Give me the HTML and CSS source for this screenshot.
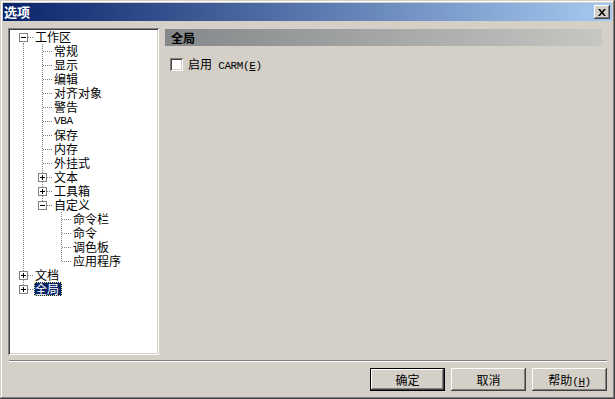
FILE: index.html
```html
<!DOCTYPE html>
<html lang="zh-CN">
  <head>
    <meta charset="UTF-8" />
    <title>选项</title>
    <link rel="stylesheet" href="styles.css">
  </head>
  <body>
    <div class="window">
      <div class="titlebar">
        <span class="titlebar__text">选项</span>
        <button class="titlebar__close">
          <svg width="8" height="7" viewBox="0 0 8 7">
            <path d="M0 0h2l2 2.5L6 0h2L5 3.5 8 7H6L4 4.5 2 7H0l3-3.5z" fill="#000"/>
          </svg>
        </button>
      </div>

      <div class="main">
        <div class="tree">
          <div class="row"><span class="cell cell--first"><span class="box box--minus"></span></span><span class="label">工作区</span></div>
          <div class="row"><span class="cell cell--line"></span><span class="cell cell--tee"></span><span class="label">常规</span></div>
          <div class="row"><span class="cell cell--line"></span><span class="cell cell--tee"></span><span class="label">显示</span></div>
          <div class="row"><span class="cell cell--line"></span><span class="cell cell--tee"></span><span class="label">编辑</span></div>
          <div class="row"><span class="cell cell--line"></span><span class="cell cell--tee"></span><span class="label">对齐对象</span></div>
          <div class="row"><span class="cell cell--line"></span><span class="cell cell--tee"></span><span class="label">警告</span></div>
          <div class="row"><span class="cell cell--line"></span><span class="cell cell--tee"></span><span class="label mono">VBA</span></div>
          <div class="row"><span class="cell cell--line"></span><span class="cell cell--tee"></span><span class="label">保存</span></div>
          <div class="row"><span class="cell cell--line"></span><span class="cell cell--tee"></span><span class="label">内存</span></div>
          <div class="row"><span class="cell cell--line"></span><span class="cell cell--tee"></span><span class="label">外挂式</span></div>
          <div class="row"><span class="cell cell--line"></span><span class="cell cell--tee"><span class="box box--plus"></span></span><span class="label">文本</span></div>
          <div class="row"><span class="cell cell--line"></span><span class="cell cell--tee"><span class="box box--plus"></span></span><span class="label">工具箱</span></div>
          <div class="row"><span class="cell cell--line"></span><span class="cell cell--end"><span class="box box--minus"></span></span><span class="label">自定义</span></div>
          <div class="row"><span class="cell cell--line"></span><span class="cell"></span><span class="cell cell--tee"></span><span class="label">命令栏</span></div>
          <div class="row"><span class="cell cell--line"></span><span class="cell"></span><span class="cell cell--tee"></span><span class="label">命令</span></div>
          <div class="row"><span class="cell cell--line"></span><span class="cell"></span><span class="cell cell--tee"></span><span class="label">调色板</span></div>
          <div class="row"><span class="cell cell--line"></span><span class="cell"></span><span class="cell cell--end"></span><span class="label">应用程序</span></div>
          <div class="row"><span class="cell cell--tee"><span class="box box--plus"></span></span><span class="label">文档</span></div>
          <div class="row"><span class="cell cell--end"><span class="box box--plus"></span></span><span class="label label--selected">全局</span></div>
        </div>

        <div class="panel">
          <div class="panel__header">全局</div>
          <label class="check">
            <span class="check__box"></span>
            <span class="check__text">启用<span class="mono"> CARM(<u>E</u>)</span></span>
          </label>
        </div>
      </div>

      <div class="separator"></div>

      <div class="buttons">
        <button class="btn btn--default">确定</button>
        <button class="btn">取消</button>
        <button class="btn">帮助<span class="mono">(<u>H</u>)</span></button>
      </div>
    </div>
  </body>
</html>
```

FILE: styles.css
```css
* {
  box-sizing: border-box;
}

body {
  margin: 0;
  background: #d4d0c8;
  font-family: "Noto Sans CJK SC", "DejaVu Sans", sans-serif;
  font-size: 12px;
  color: #000;
}

.mono {
  font-family: "Liberation Mono", "DejaVu Sans Mono", monospace;
  font-size: 11px;
  letter-spacing: -0.4px;
}

.mono u {
  text-underline-offset: 1px;
}

/* outer raised frame */
.window {
  width: 615px;
  height: 399px;
  padding: 3px;
  display: flex;
  flex-direction: column;
  background: #d4d0c8;
  box-shadow: inset -1px -1px #404040, inset 1px 1px #d4d0c8,
    inset -2px -2px #808080, inset 2px 2px #ffffff;
}

.titlebar {
  height: 18px;
  display: flex;
  align-items: center;
  justify-content: space-between;
  padding: 0 2px 0 1px;
  background: linear-gradient(to right, #0a246a, #a6caf0);
}

.titlebar__text {
  color: #fff;
  font-weight: bold;
  font-size: 13px;
  line-height: 14px;
}

.titlebar__close {
  width: 16px;
  height: 14px;
  padding: 0;
  border: 0;
  display: flex;
  align-items: center;
  justify-content: center;
  background: #d4d0c8;
  box-shadow: inset -1px -1px #404040, inset 1px 1px #ffffff,
    inset -2px -2px #808080, inset 2px 2px #d4d0c8;
}

.main {
  display: flex;
  gap: 6px;
  padding: 7px 10px 0 5px;
}

/* sunken tree view */
.tree {
  width: 151px;
  height: 327px;
  padding: 2px 0 0 6px;
  background: #fff;
  box-shadow: inset 1px 1px #808080, inset -1px -1px #ffffff,
    inset 2px 2px #404040, inset -2px -2px #d4d0c8;
}

.row {
  display: flex;
  height: 14px;
  line-height: 14px;
  white-space: nowrap;
}

.cell {
  width: 19px;
  height: 14px;
  flex: none;
  display: flex;
  align-items: flex-start;
  background-repeat: no-repeat;
}

.cell--line {
  background-image: repeating-linear-gradient(to bottom, #808080 0 1px, transparent 1px 2px);
  background-size: 1px 14px;
  background-position: 9px 0;
}

.cell--tee {
  background-image: repeating-linear-gradient(to bottom, #808080 0 1px, transparent 1px 2px),
    repeating-linear-gradient(to right, #808080 0 1px, transparent 1px 2px);
  background-size: 1px 14px, 9px 1px;
  background-position: 9px 0, 10px 7px;
}

.cell--end {
  background-image: repeating-linear-gradient(to bottom, #808080 0 1px, transparent 1px 2px),
    repeating-linear-gradient(to right, #808080 0 1px, transparent 1px 2px);
  background-size: 1px 8px, 9px 1px;
  background-position: 9px 0, 10px 7px;
}

.cell--first {
  background-image: repeating-linear-gradient(to bottom, #808080 0 1px, transparent 1px 2px),
    repeating-linear-gradient(to right, #808080 0 1px, transparent 1px 2px);
  background-size: 1px 7px, 9px 1px;
  background-position: 9px 7px, 10px 7px;
}

.box {
  width: 9px;
  height: 9px;
  margin: 3px 0 0 5px;
  border: 1px solid #808080;
  background-color: #fff;
  background-repeat: no-repeat;
}

.box--minus {
  background-image: linear-gradient(#000, #000);
  background-size: 5px 1px;
  background-position: 1px 3px;
}

.box--plus {
  background-image: linear-gradient(#000, #000), linear-gradient(#000, #000);
  background-size: 5px 1px, 1px 5px;
  background-position: 1px 3px, 3px 1px;
}

.label {
  margin-left: 1px;
  padding: 0 2px 0 1px;
  height: 14px;
}

.label.mono {
  padding-left: 1px;
}

.label--selected {
  padding: 0 3px 0 1px;
  background: #0a246a;
  color: #fff;
  outline: 1px dotted #e4e090;
  outline-offset: -1px;
}

.panel {
  flex: 1;
  padding-top: 1px;
}

.panel__header {
  height: 17px;
  line-height: 17px;
  padding-left: 6px;
  font-weight: bold;
  background: linear-gradient(to right, #84888a, #c6c6c2);
}

.check {
  display: flex;
  align-items: center;
  gap: 5px;
  margin: 12px 0 0 5px;
  height: 13px;
}

.check__box {
  width: 13px;
  height: 13px;
  background: #fff;
  box-shadow: inset 1px 1px #808080, inset -1px -1px #ffffff,
    inset 2px 2px #404040, inset -2px -2px #d4d0c8;
}

.check__text {
  line-height: 13px;
}

.separator {
  height: 2px;
  margin: 5px 5px 0 6px;
  border-top: 1px solid #808080;
  border-bottom: 1px solid #ffffff;
}

.buttons {
  display: flex;
  justify-content: flex-end;
  gap: 6px;
  padding: 6px 5px 0 0;
}

.btn {
  width: 75px;
  height: 23px;
  padding: 0;
  border: 0;
  font: inherit;
  color: #000;
  background: #d4d0c8;
  box-shadow: inset -1px -1px #404040, inset 1px 1px #ffffff,
    inset -2px -2px #808080, inset 2px 2px #d4d0c8;
}

.btn--default {
  border: 1px solid #000;
}
```
